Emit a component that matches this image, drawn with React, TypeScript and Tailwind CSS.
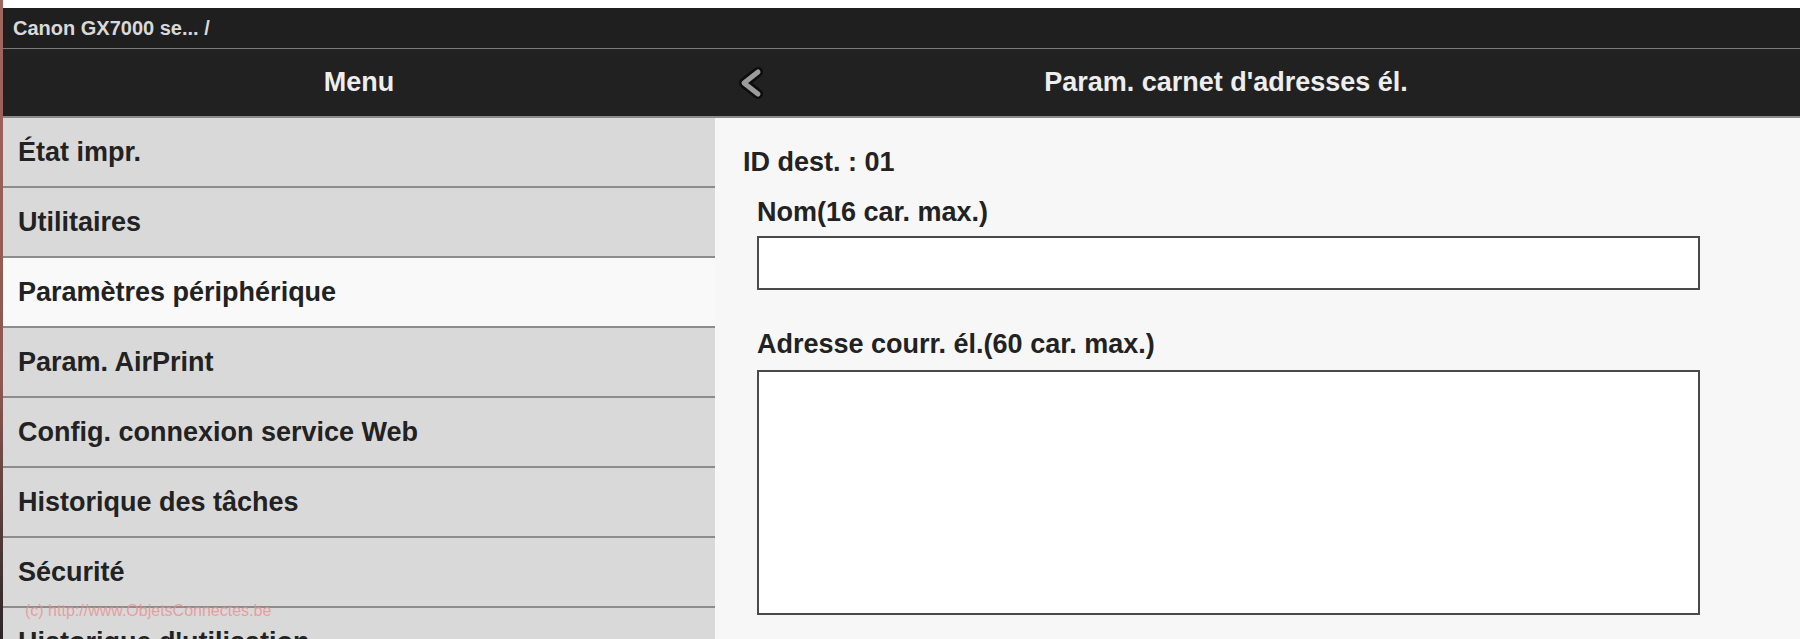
import React from 'react';

const menuItems = [
  'État impr.',
  'Utilitaires',
  'Paramètres périphérique',
  'Param. AirPrint',
  'Config. connexion service Web',
  'Historique des tâches',
  'Sécurité',
  "Historique d'utilisation",
];

const ACTIVE = 'Paramètres périphérique';

export default function App() {
  return (
    <div
      className="relative flex h-[639px] w-[1800px] overflow-hidden bg-[#f7f7f7] text-[#222]"
      style={{ fontFamily: '"Liberation Sans", Arial, sans-serif' }}
    >
      {/* desktop edge peeking through on the left */}
      <div className="w-[3px] shrink-0 bg-gradient-to-b from-[#a2665c] via-[#8d5850] via-60% to-[#2c2628]" />

      <div className="flex min-w-0 flex-1 flex-col">
        {/* window chrome strip */}
        <div className="h-[8px] shrink-0 bg-white" />

        {/* breadcrumb bar */}
        <div className="flex h-[41px] shrink-0 items-center border-b border-[#7a7a7a] bg-[#1f1f1f] pl-[10px]">
          <span className="text-[20px] font-bold leading-none text-[#d9d9d9]">Canon GX7000 se... /</span>
        </div>

        {/* section headers */}
        <div className="flex h-[69px] shrink-0 border-b-2 border-[#8a8a8a] bg-[#212121] text-[27px] font-bold text-[#eeeeee]">
          <div className="flex w-[712px] shrink-0 items-center justify-center">Menu</div>
          <div className="flex flex-1 items-center pl-[23px] pr-[111px]">
            <svg width="25" height="30" viewBox="0 0 25 30" className="shrink-0 overflow-visible">
              <polyline points="20,4 6,15 20,26" fill="none" stroke="#0c0c0c" strokeWidth="10" strokeLinecap="round" strokeLinejoin="round" />
              <polyline points="20,4 6,15 20,26" fill="none" stroke="#9b9b9b" strokeWidth="5" strokeLinecap="round" strokeLinejoin="round" />
            </svg>
            <div className="flex-1 text-center">Param. carnet d'adresses él.</div>
          </div>
        </div>

        <div className="flex min-h-0 flex-1">
          {/* side menu */}
          <div className="flex w-[712px] shrink-0 flex-col bg-[#d9d9d9]">
            {menuItems.map((item) => (
              <div
                key={item}
                className={
                  'flex h-[70px] shrink-0 items-center border-b-2 border-[#8c8c8c] pl-[15px] text-[27px] font-bold ' +
                  (item === ACTIVE ? 'bg-[#f9f9f9]' : 'bg-[#d9d9d9]')
                }
              >
                {item}
              </div>
            ))}
          </div>

          {/* address book form */}
          <div className="flex flex-1 flex-col bg-[#f7f7f7] pl-[28px] pt-[28px] text-[27px] font-bold leading-[32px]">
            <div>ID dest. : 01</div>
            <div className="pl-[14px]">
              <div className="mt-[18px]">Nom(16 car. max.)</div>
              <div className="mt-[8px] h-[54px] w-[943px] border-2 border-[#4a4a4a] bg-white" />
              <div className="mt-[38px]">Adresse courr. él.(60 car. max.)</div>
              <div className="mt-[10px] h-[245px] w-[943px] border-2 border-[#4a4a4a] bg-white" />
            </div>
          </div>
        </div>
      </div>

      {/* watermark */}
      <div className="pointer-events-none absolute left-[25px] top-[602px] text-[16px] leading-[18px] text-[#e88f8f]/80">
        (c) http://www.ObjetsConnectes.be
      </div>
    </div>
  );
}
